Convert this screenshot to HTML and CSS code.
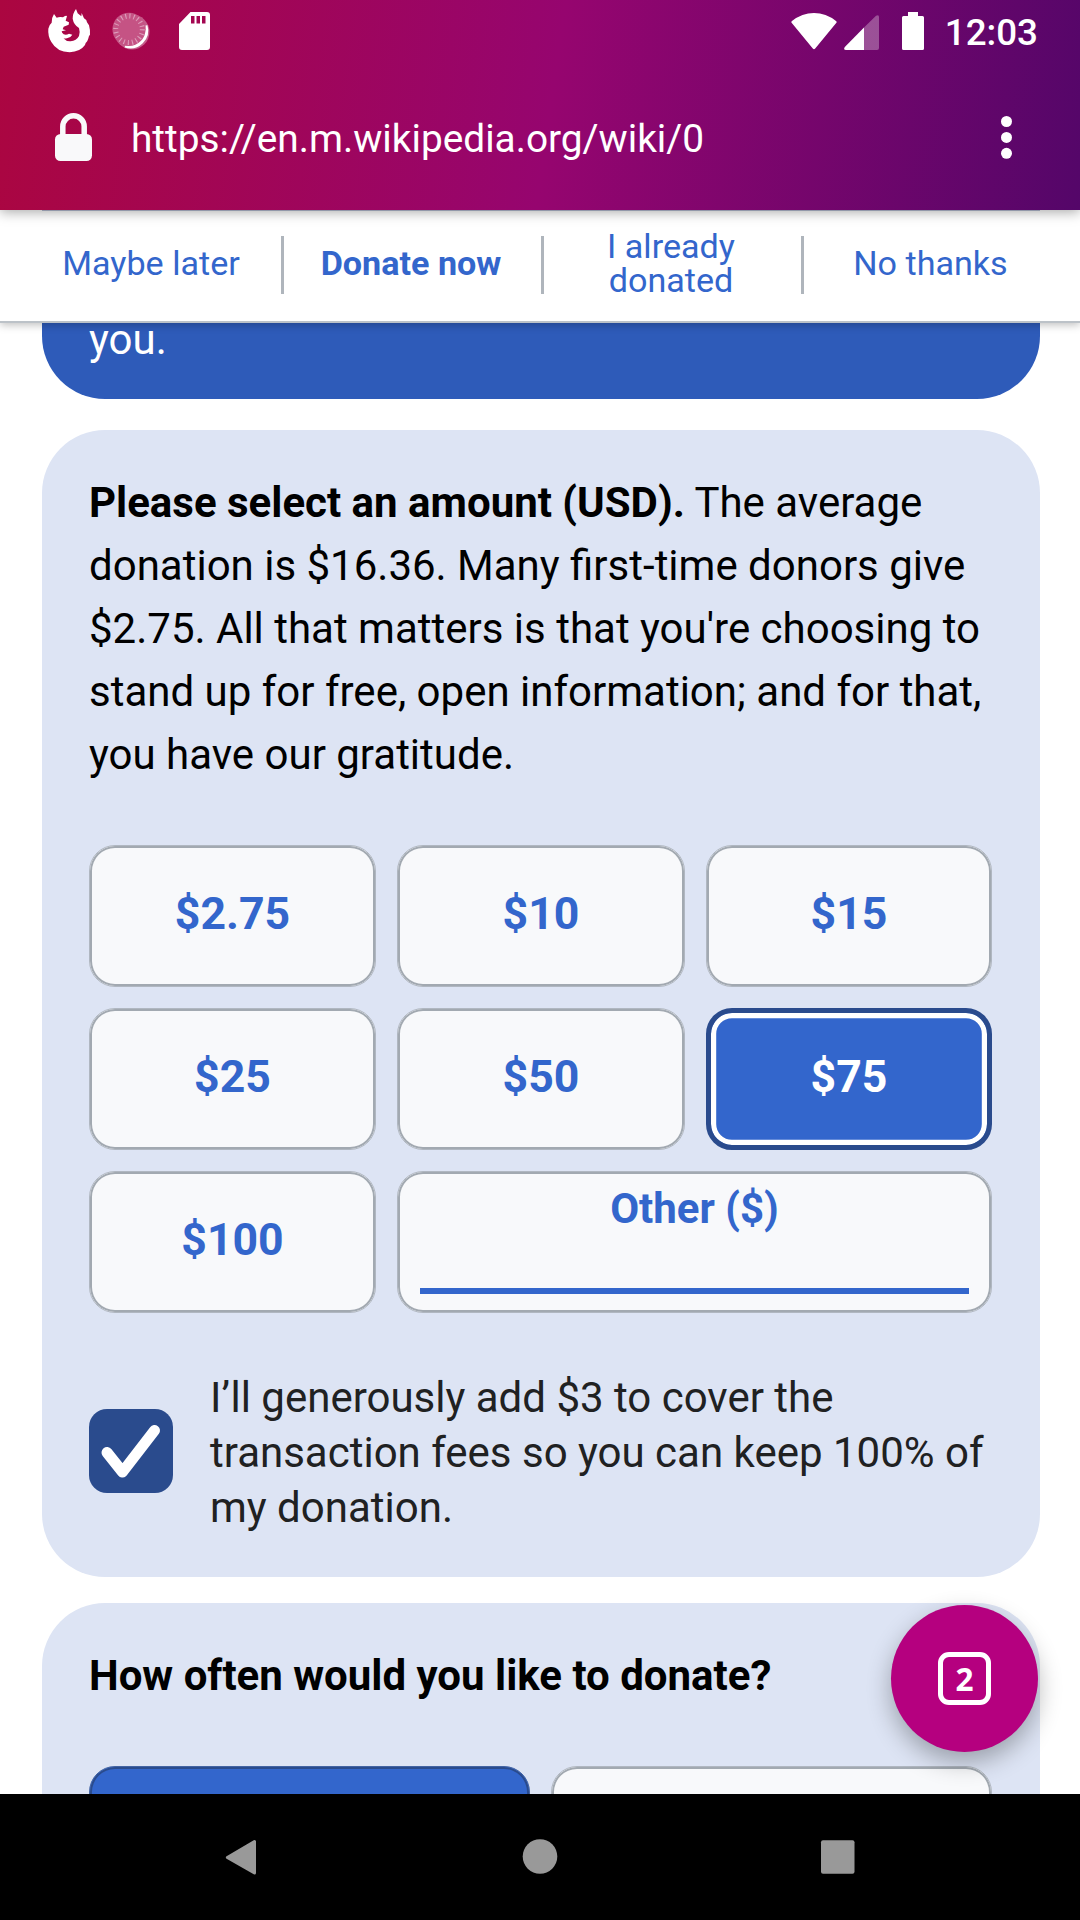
FILE: index.html
```html
<!DOCTYPE html>
<html lang="en">
<head>
<meta charset="utf-8">
<title>Wikipedia</title>
<link rel="stylesheet" href="styles.css">
</head>
<body>
<div class="screen">
  <header class="top">
    <div class="status">
      <div class="status-left">
        <svg class="i-fox" viewBox="140 24 132 135"><path fill="#fff" d="M161 42 L169 53 Q178 50 188 52 Q194 46 200 48 L196 62 L206 67 L205 74 L190 80 L187 88 L197 91 L184 94 Q184 98 190 103 Q198 106 206 101 L216 104 Q210 114 200 115 Q192 116 189 115 Q198 125 211 124 Q228 123 236 108 Q240 96 236 84 Q220 74 217 56 Q217 40 227 27 L232 40 L243 49 L244 39 L251 55 Q260 60 260 67 L266 76 Q270 90 269 104 L266 108 Q262 125 256 129 L254 135 Q240 155 208 157 Q170 156 153 126 Q142 108 144 86 Q148 72 154 68 Q154 52 161 42 Z"/></svg>
        <svg class="i-spin" viewBox="0 0 38 38"><circle cx="20" cy="20" r="17.5" fill="#fff" opacity=".35"/><path d="M34.5 13.5 A17 17 0 0 1 13 34.5 A20 20 0 0 0 34.5 13.5Z" fill="#fff" stroke="#fff" stroke-width="2"/><circle cx="17" cy="17.3" r="16.6" fill="#c55384"/><circle cx="17" cy="17.3" r="13.3" fill="none" stroke="#dd9dbb" stroke-width="5" stroke-dasharray="1.1 3.078"/></svg>
        <svg class="i-sd" viewBox="0 0 31 38"><path fill="#fff" fill-rule="evenodd" d="M11.5 0H28q3 0 3 3v32q0 3-3 3H3q-3 0-3-3V12Zm.5 4v7.500h3.500V4Zm5.500 0v7.500H21V4ZM23 4v7.500h3.500V4Z"/></svg>
      </div>
      <div class="status-right">
        <svg class="i-wifi" viewBox="0 0 46 37"><path fill="#fff" d="M.4 9.500Q0 8.500 1 8Q11 0 23 0T45 8Q46 8.500 45.600 9.500L24.200 35.500Q23 37 21.800 35.500Z"/></svg>
        <svg class="i-cell" viewBox="0 0 35 35"><path fill="#fff" opacity=".3" d="M20 12.500 32 .8Q35-1 35 2V33q0 2-2 2H20Z"/><path fill="#fff" d="M20 12.500V35H2Q-1 35 .8 32Z"/></svg>
        <svg class="i-batt" viewBox="0 0 22 38"><path fill="#fff" d="M6 0H16V4H20.500Q22 4 22 5.500V36.500Q22 38 20.500 38H1.500Q0 38 0 36.500V5.500Q0 4 1.500 4H6Z"/></svg>
        <span class="clock">12:03</span>
      </div>
    </div>
    <div class="urlbar">
      <svg class="i-lock" viewBox="0 0 37 48"><path fill="none" stroke="#f9f9fa" stroke-width="5.500" d="M7.800 24V13.500a10.700 10.700 0 0 1 21.400 0V24"/><rect y="21" width="37" height="27" rx="5.500" fill="#f9f9fa"/></svg>
      <span class="url">https://en.m.wikipedia.org/wiki/0</span>
      <svg class="i-menu" viewBox="0 0 11 43"><g fill="#fff"><circle cx="5.500" cy="5.500" r="5.500"/><circle cx="5.500" cy="21.400" r="5.500"/><circle cx="5.500" cy="37.300" r="5.500"/></g></svg>
    </div>
  </header>

  <main class="page">
    <nav class="prompt">
      <a>Maybe later</a>
      <a class="strong">Donate now</a>
      <a>I already<br>donated</a>
      <a>No thanks</a>
    </nav>
    <section class="card appeal"><p>you.</p></section>
    <section class="card amount">
      <p class="lead"><b>Please select an amount (USD).</b> The average donation is $16.36. Many first-time donors give $2.75. All that matters is that you're choosing to stand up for free, open information; and for that, you have our gratitude.</p>
      <div class="grid">
        <div class="opt">$2.75</div>
        <div class="opt">$10</div>
        <div class="opt">$15</div>
        <div class="opt">$25</div>
        <div class="opt">$50</div>
        <div class="opt chosen">$75</div>
        <div class="opt">$100</div>
        <div class="opt other"><span>Other ($)</span><i></i></div>
      </div>
      <div class="fee">
        <svg class="check" viewBox="0 0 84 84"><rect width="84" height="84" rx="18" fill="#2a4b8d"/><path fill="none" stroke="#fff" stroke-width="11" stroke-linecap="round" stroke-linejoin="round" d="M18 43.500 33.500 63 65.500 21.500"/></svg>
        <p>I’ll generously add $3 to cover the transaction fees so you can keep 100% of my donation.</p>
      </div>
    </section>
    <section class="card often">
      <h2>How often would you like to donate?</h2>
      <div class="freq"><div class="opt picked"></div><div class="opt"></div></div>
    </section>
    <div class="fab"><span>2</span></div>
  </main>

  <footer class="navbar">
    <svg viewBox="0 0 46 46"><path fill="#999" stroke="#999" stroke-width="3" stroke-linejoin="round" d="M9.300 23.500 36.500 7.500V39Z"/></svg>
    <svg viewBox="0 0 46 46"><circle cx="23" cy="22.500" r="17.300" fill="#999"/></svg>
    <svg viewBox="0 0 46 46"><rect x="6" y="6.300" width="33.500" height="33.500" rx="2" fill="#999"/></svg>
  </footer>
</div>
</body>
</html>
```
FILE: styles.css
```css
* { box-sizing: border-box; }
body { margin: 0; background: #fff; font-family: Roboto, sans-serif; }
svg { display: block; flex: none; overflow: visible; }
p, h2 { margin: 0; }
.screen { width: 1080px; height: 1920px; display: flex; flex-direction: column; overflow: hidden; }

.top { height: 210px; flex: none; position: relative; z-index: 3; color: #fff;
  background: linear-gradient(98deg, #ab0640 0%, #96056f 51%, #540669 100%);
  box-shadow: 0 2px 12px rgba(0,0,0,.35); }
.status { height: 63px; display: flex; justify-content: space-between; padding: 0 42px 0 47px; }
.status-left, .status-right { display: flex; align-items: flex-start; }
.i-fox { width: 44px; height: 45px; margin-top: 8px; }
.i-spin { width: 38px; height: 38px; margin: 12px 0 0 21px; }
.i-sd { width: 31px; height: 38px; margin: 12px 0 0 29px; }
.i-wifi { width: 46px; height: 37px; margin-top: 12.5px; }
.i-cell { width: 35px; height: 35px; margin: 15px 0 0 7px; }
.i-batt { width: 22px; height: 38px; margin: 12px 0 0 23px; }
.clock { font-size: 36.75px; font-weight: 500; line-height: 44px; margin: 11px 0 0 21px; }
.urlbar { height: 147px; display: flex; align-items: center; padding: 2px 68px 0 55px; }
.i-lock { width: 37px; height: 48px; margin-bottom: 2px; }
.url { flex: 1; font-size: 38.8px; line-height: 48px; padding: 2px 0 0 39px; }
.i-menu { width: 11px; height: 43px; }

.page { height: 1584px; flex: none; position: relative; overflow: hidden; padding: 0 40px 0 42px; }
.prompt { height: 113px; margin: 0 -40px 0 -42px; padding: 0 17px 2px 24px; position: relative; z-index: 2;
  display: grid; grid-template-columns: repeat(4, 260px); align-items: center;
  background: linear-gradient(#b9c0d6, #b9c0d6) 42px 0 / 998px 1px no-repeat, #fff;
  border-bottom: 2px solid #bcc2c8; box-shadow: 0 2px 8px rgba(0,0,0,.25);
  color: #36c; font-size: 34.125px; line-height: 34px; text-align: center; }
.prompt a { height: 58px; display: flex; align-items: center; justify-content: center; border-right: 3px solid #afb5bc; padding: 0 3px 3px 0; }
.prompt a:last-child { border-right: 0; padding-right: 7px; }
.strong { font-weight: 700; }

.card { background: #dde4f4; border-radius: 63px; padding: 41px 47px 0; font-size: 42px; line-height: 63px; color: #000; }
.appeal { height: 200px; margin-top: -124px; padding-top: 109px; background: #2e5bb9; color: #fff; }
.amount { height: 1147px; margin-top: 31px; }
.lead { height: 374px; margin-right: -10px; }
.grid { display: grid; grid-template-columns: 287px 288px 286px; gap: 21px; grid-auto-rows: 142px; margin-right: -2px; }
.opt { display: flex; align-items: center; justify-content: center; border: 1px solid #b0b7c1; border-radius: 26px;
  box-shadow: inset 0 0 0 2px #a2a9b1;
  background: #f8f9fb; color: #36c; font-size: 44.6px; font-weight: 700; line-height: 52px; padding-bottom: 4px; }
.chosen { background: #36c; color: #fff; border: 5px solid #2a4b8d; box-shadow: inset 0 0 0 5.2px #fff; }
.other { grid-column: span 2; flex-direction: column; justify-content: space-between; padding: 11px 22px 18px; font-size: 42px; }
.other i { align-self: stretch; height: 6px; background: #36c; }
.fee { display: flex; align-items: center; gap: 37px; margin-top: 57px; color: #202122; line-height: 55px; }
.check { width: 84px; height: 84px; margin-bottom: 3px; }
.often { margin-top: 26px; height: 300px; }
.often h2 { font-size: 42px; line-height: 63px; padding-bottom: 59px; }
.freq { display: grid; grid-template-columns: 441px 441px; gap: 21px; }
.freq .opt { height: 142px; }
.freq .picked { background: #36c; border-color: #4364a3; box-shadow: inset 0 0 0 2px #2a4b8d; }

.fab { position: absolute; left: 891px; top: 1395px; width: 147px; height: 147px; border-radius: 50%; background: #b5007f;
  display: flex; align-items: center; justify-content: center; box-shadow: 0 10px 24px rgba(0,0,0,.3); }
.fab span { width: 53px; height: 53px; border: 5px solid #fff; border-radius: 11px; color: #fff;
  font-family: "Open Sans", sans-serif; font-size: 31.5px; line-height: 43px; font-weight: 700; text-align: center; }

.navbar { height: 126px; flex: none; position: relative; z-index: 3; background: #000; display: flex; align-items: center; justify-content: center; gap: 252.5px; padding-right: 1px; }
.navbar svg { width: 46px; height: 46px; }
```
